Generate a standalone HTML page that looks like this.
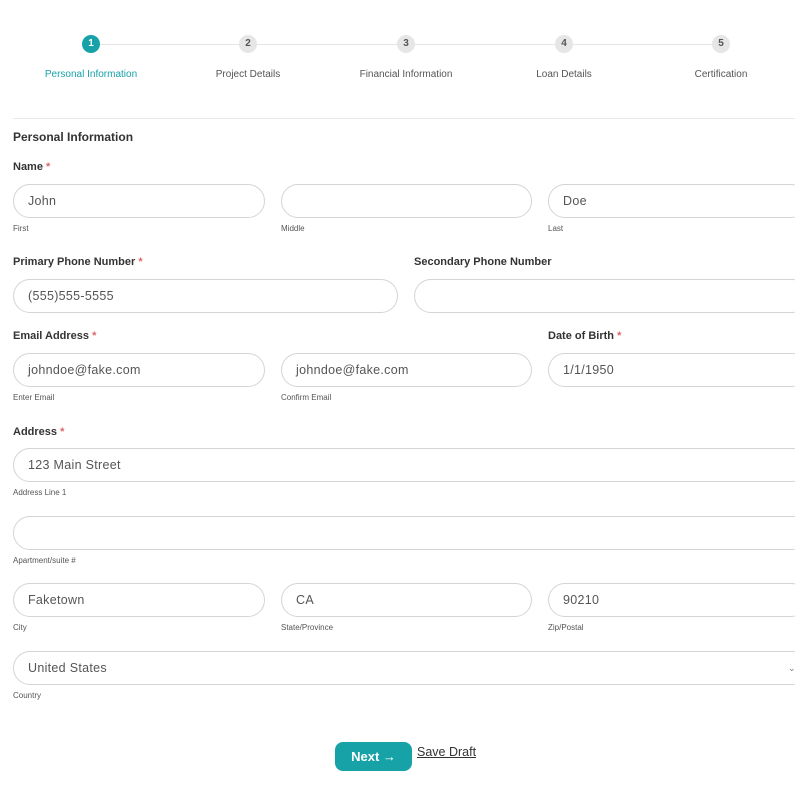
<!DOCTYPE html><html><head><style>
body{margin:0;width:795px;height:800px;background:#fff;position:relative;overflow:hidden;font-family:"Liberation Sans",sans-serif;color:#333}
.a{position:absolute}
.c{position:absolute;width:18px;height:18px;border-radius:50%;background:#e6e6e6;color:#555;font-size:10px;font-weight:bold;text-align:center;line-height:18px;top:35px}
.sl{position:absolute;top:69px;font-size:10px;color:#555;transform:translateX(-50%);white-space:nowrap}
.lb{position:absolute;font-size:11px;font-weight:bold;color:#333}
.lb span{color:#d66}
.in{position:absolute;border:1px solid #d4d4d4;border-radius:17px;box-sizing:border-box;height:34px;font-size:12.5px;color:#555;line-height:32px;padding-left:14px;letter-spacing:.3px}
.sub{position:absolute;font-size:8px;color:#555}
</style></head><body>
<div class="a" style="left:100px;top:44px;width:620px;height:1px;background:#e4e4e4"></div>
<div class="c" style="left:82px;background:#17a2a8;color:#fff">1</div>
<div class="c" style="left:239px">2</div>
<div class="c" style="left:397px">3</div>
<div class="c" style="left:555px">4</div>
<div class="c" style="left:712px">5</div>
<div class="sl" style="left:91px;color:#17a2a8">Personal Information</div>
<div class="sl" style="left:248px">Project Details</div>
<div class="sl" style="left:406px">Financial Information</div>
<div class="sl" style="left:564px">Loan Details</div>
<div class="sl" style="left:721px">Certification</div>
<div class="a" style="left:13px;top:118px;width:782px;height:1px;background:#e8e8e8"></div>
<div class="lb" style="left:13px;top:130px;font-size:12px">Personal Information</div>
<div class="lb" style="left:13px;top:161px">Name <span>*</span></div>
<div class="in" style="left:13px;top:184px;width:252px">John</div>
<div class="in" style="left:281px;top:184px;width:251px"></div>
<div class="in" style="left:548px;top:184px;width:260px">Doe</div>
<div class="sub" style="left:13px;top:224px">First</div>
<div class="sub" style="left:281px;top:224px">Middle</div>
<div class="sub" style="left:548px;top:224px">Last</div>
<div class="lb" style="left:13px;top:256px">Primary Phone Number <span>*</span></div>
<div class="lb" style="left:414px;top:256px">Secondary Phone Number</div>
<div class="in" style="left:13px;top:279px;width:385px">(555)555-5555</div>
<div class="in" style="left:414px;top:279px;width:395px"></div>
<div class="lb" style="left:13px;top:330px">Email Address <span>*</span></div>
<div class="lb" style="left:548px;top:330px">Date of Birth <span>*</span></div>
<div class="in" style="left:13px;top:353px;width:252px">johndoe@fake.com</div>
<div class="in" style="left:281px;top:353px;width:251px">johndoe@fake.com</div>
<div class="in" style="left:548px;top:353px;width:260px">1/1/1950</div>
<div class="sub" style="left:13px;top:393px">Enter Email</div>
<div class="sub" style="left:281px;top:393px">Confirm Email</div>
<div class="lb" style="left:13px;top:426px">Address <span>*</span></div>
<div class="in" style="left:13px;top:448px;width:796px">123 Main Street</div>
<div class="sub" style="left:13px;top:488px">Address Line 1</div>
<div class="in" style="left:13px;top:516px;width:796px"></div>
<div class="sub" style="left:13px;top:556px">Apartment/suite #</div>
<div class="in" style="left:13px;top:583px;width:252px">Faketown</div>
<div class="in" style="left:281px;top:583px;width:251px">CA</div>
<div class="in" style="left:548px;top:583px;width:260px">90210</div>
<div class="sub" style="left:13px;top:623px">City</div>
<div class="sub" style="left:281px;top:623px">State/Province</div>
<div class="sub" style="left:548px;top:623px">Zip/Postal</div>
<div class="in" style="left:13px;top:651px;width:796px">United States<span style="position:absolute;left:774px;font-size:9px;color:#777">⌄</span></div>
<div class="sub" style="left:13px;top:691px">Country</div>
<div class="a" style="left:335px;top:742px;width:77px;height:29px;border-radius:8px;background:#17a2a8;color:#fff;font-size:13px;font-weight:bold;text-align:center;line-height:29px">Next →</div>
<div class="a" style="left:417px;top:745px;font-size:12.5px;color:#333;text-decoration:underline">Save Draft</div>
</body></html>
